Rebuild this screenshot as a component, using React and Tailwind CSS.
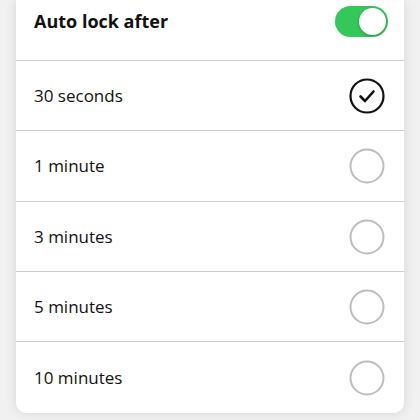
import { useState } from 'react';

const options = ['30 seconds', '1 minute', '3 minutes', '5 minutes', '10 minutes'];
const heights = ['h-[70px]', 'h-[71px]', 'h-[70px]', 'h-[70px]', 'h-[72px]'];

function Toggle({ on, onChange }) {
    return (
        <button
            onClick={() => onChange(!on)}
            className={`relative w-[53px] h-[31px] rounded-full transition-colors ${on ? 'bg-[#34c759]' : 'bg-[#d9d9d9]'}`}
        >
            <span
                className={`absolute top-[2px] w-[27px] h-[27px] rounded-full bg-white shadow-[0_1px_3px_rgba(0,0,0,0.25)] transition-all ${on ? 'left-[24px]' : 'left-[2px]'}`}
            />
        </button>
    );
}

function Radio({ checked }) {
    if (checked) {
        return (
            <svg width="36" height="36" viewBox="0 0 36 36">
                <circle cx="18" cy="18" r="16.5" fill="none" stroke="#111" strokeWidth="2.2" />
                <path d="M11.5 18.5 L16 23 L24.5 13.5" fill="none" stroke="#111" strokeWidth="2.6" strokeLinecap="round" strokeLinejoin="round" />
            </svg>
        );
    }
    return (
        <svg width="36" height="36" viewBox="0 0 36 36">
            <circle cx="18" cy="18" r="16.5" fill="none" stroke="#bdbdbd" strokeWidth="2" />
        </svg>
    );
}

export default function App() {
    const [enabled, setEnabled] = useState(true);
    const [selected, setSelected] = useState(0);

    return (
        <div
            className="w-[420px] h-[420px] overflow-hidden bg-[#f1f1f1] px-4"
            style={{ fontFamily: '"Open Sans", "Noto Sans", sans-serif' }}
        >
            <div className="bg-white rounded-b-[10px] shadow-[0_0_12px_rgba(0,0,0,0.12)] text-[#111]">
                {/* header */}
                <div className="h-[60px] flex items-start justify-between pl-[18px] pr-[16px] pt-[6px]">
                    <div className="h-[31px] flex items-center text-[18px] font-bold">Auto lock after</div>
                    <Toggle on={enabled} onChange={setEnabled} />
                </div>

                {options.map((opt, i) => (
                    <div
                        key={opt}
                        onClick={() => setSelected(i)}
                        className={`border-t border-[#cccccc] flex items-center justify-between pl-[18px] pr-[19px] cursor-pointer ${heights[i]}`}
                    >
                        <span className="text-[17px]">{opt}</span>
                        <Radio checked={selected === i} />
                    </div>
                ))}
            </div>
        </div>
    );
}
